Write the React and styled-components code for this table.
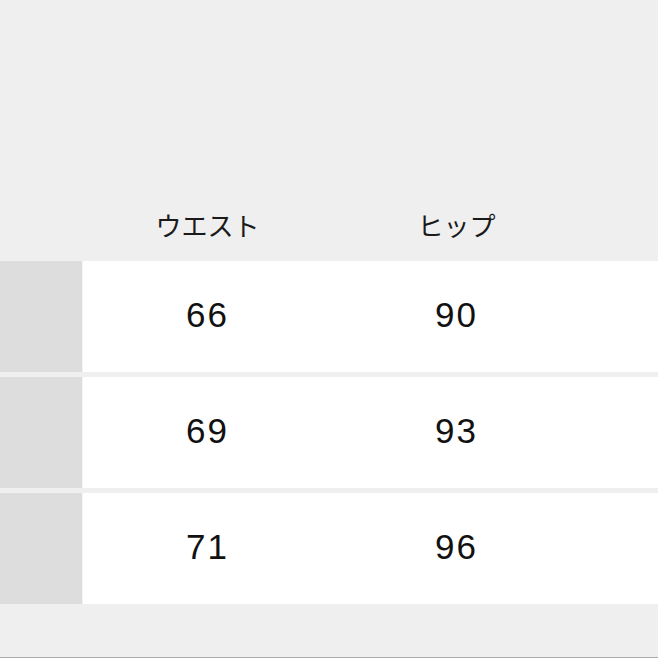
import React from "react";
import styled, { createGlobalStyle } from "styled-components";

const Global = createGlobalStyle`
  html, body { margin: 0; padding: 0; }
  body {
    background: #efefef;
    font-family: "Liberation Sans", "Noto Sans CJK JP", sans-serif;
    color: #111;
  }
`;

const Page = styled.div`
  width: 658px;
  height: 658px;
  box-sizing: border-box;
  overflow: hidden;
  background: #efefef;
  border-bottom: 1px solid #aaaaaa;
  display: flex;
  flex-direction: column;
  padding-top: 191px;
`;

const HeaderRow = styled.div`
  display: grid;
  grid-template-columns: 83px 249px 249px 1fr;
  height: 70px;
  align-items: center;
`;

const HeaderCell = styled.div`
  text-align: center;
  font-family: "Noto Sans CJK JP", sans-serif;
  font-size: 26px;
  line-height: 1;
  color: #1a1a1a;
  padding-bottom: 2px;
`;

const Body = styled.div`
  display: flex;
  flex-direction: column;
  gap: 5px;
`;

const Row = styled.div`
  display: grid;
  grid-template-columns: 82px 1fr;
  column-gap: 1px;
  height: 111px;
  background: #f4f4f4;
`;

const LabelCell = styled.div`
  background: #dddddd;
`;

const Values = styled.div`
  background: #ffffff;
  display: grid;
  grid-template-columns: 249px 249px 1fr;
  align-items: center;
`;

const ValueCell = styled.div`
  text-align: center;
  font-family: "Liberation Sans", sans-serif;
  font-size: 35px;
  letter-spacing: 2px;
  line-height: 1;
  color: #111;
  padding-bottom: 4px;
`;

const rows = [
  ["66", "90"],
  ["69", "93"],
  ["71", "96"],
];

export default function App() {
  return (
    <>
      <Global />
      <Page>
        <HeaderRow>
          <span />
          <HeaderCell>ウエスト</HeaderCell>
          <HeaderCell>ヒップ</HeaderCell>
          <span />
        </HeaderRow>
        <Body>
          {rows.map((r, i) => (
            <Row key={i}>
              <LabelCell />
              <Values>
                <ValueCell>{r[0]}</ValueCell>
                <ValueCell>{r[1]}</ValueCell>
                <span />
              </Values>
            </Row>
          ))}
        </Body>
      </Page>
    </>
  );
}
